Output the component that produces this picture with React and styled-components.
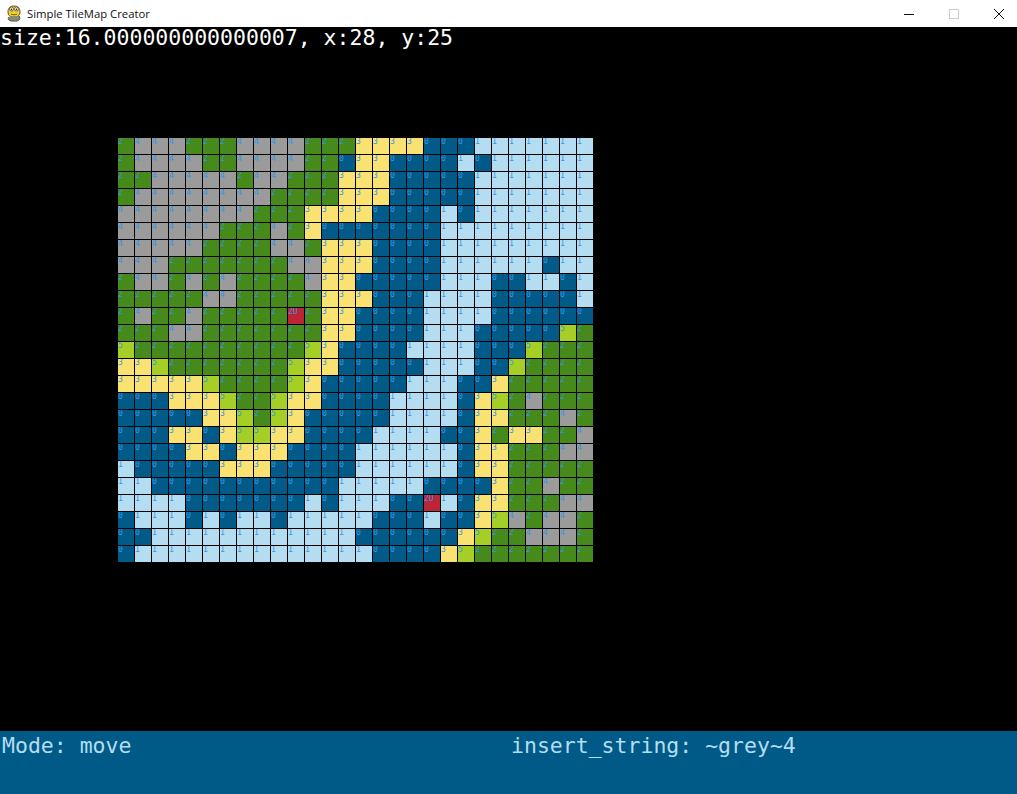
import React from 'react'
import styled, { createGlobalStyle } from 'styled-components'

// one string per row, r is the red marker tile
const MAP = [
  '2444222444422233330001111111',
  '2444422444422033000010111111',
  '2244444244222333000001111111',
  '2444444442222333000001111111',
  '4444444422233330000101111111',
  '4444442224230000000111111111',
  '4444422224423330000111111111',
  '4442222222443330000111111011',
  '2442424222243300000111001101',
  '2222244222223330001111000001',
  '2422422222r23300001111000000',
  '2224422222223300001110000052',
  '5222222222253000011110005222',
  '3352222222533000001110052222',
  '3333352222530000011100322222',
  '0003335225330000111103524222',
  '0000033525300000111103322242',
  '0003303553300001111003233224',
  '0000330333000011111103322244',
  '1000003330000011111103322222',
  '1100000000000111110000322422',
  '111100000001011100r103322244',
  '0111010110111110001003542442',
  '0011111111111100000035224442',
  '0111111111111110000352222222',
]

const TILES = {
  0: '#015a87',
  1: '#b4ddf2',
  2: '#458a1a',
  3: '#f9e272',
  4: '#9b9b9b',
  5: '#a5cf27',
  r: '#bd2436',
}

const GlobalStyle = createGlobalStyle`
  html, body, #root {
    margin: 0;
    height: 100%;
  }
  body {
    background: #000;
    overflow: hidden;
  }
`

const Window = styled.div`
  display: flex;
  flex-direction: column;
  height: 794px;
  width: 1017px;
`

const TitleBar = styled.header`
  display: flex;
  align-items: center;
  flex: 0 0 27px;
  background: #fff;
  padding-left: 6px;
`

const Title = styled.span`
  font: 11.3px "Open Sans", "Noto Sans", sans-serif;
  color: #111;
  margin-left: 5px;
  white-space: nowrap;
`

const Controls = styled.div`
  display: flex;
  align-items: center;
  gap: 35px;
  margin-left: auto;
  padding-right: 13px;
`

const Canvas = styled.main`
  flex: 1;
  background: #000;
  display: flex;
  flex-direction: column;
`

const Readout = styled.div`
  font: 21.5px/22px "DejaVu Sans Mono", monospace;
  color: #fff;
  white-space: pre;
  height: 22px;
`

const Board = styled.div`
  display: grid;
  grid-template-columns: repeat(28, 16px);
  grid-auto-rows: 16px;
  gap: 1px;
  margin: 89px 0 0 118px;
`

const Tile = styled.div`
  background: ${p => TILES[p.$kind]};
  color: #2f98e8;
  font: 8px/8px "DejaVu Sans Mono", monospace;
  overflow: hidden;
`

const StatusBar = styled.footer`
  flex: 0 0 63px;
  background: #005a87;
  display: grid;
  grid-template-columns: 511px 1fr;
  align-items: start;
  padding-top: 4px;
  box-sizing: border-box;
`

const StatusText = styled.span`
  font: 21.5px/22px "DejaVu Sans Mono", monospace;
  color: #b4ddf2;
  white-space: pre;
  padding-left: ${p => p.$inset || 0}px;
`

const SnakeIcon = () => (
  <svg width="16" height="17" viewBox="0 0 16 17">
    <path d="M2 7 C2 3 4 1 8 1 C12 1 14 3 14 7 C14 10 12 12 9 12 L6 12 C4 12 2 10 2 7Z" fill="#f0cf2e" stroke="#6b5a10" strokeWidth="1" />
    <circle cx="5.5" cy="4" r="2" fill="#fff" stroke="#333" strokeWidth="0.7" />
    <circle cx="10.5" cy="4" r="2" fill="#fff" stroke="#333" strokeWidth="0.7" />
    <circle cx="5.5" cy="4.2" r="0.8" fill="#111" />
    <circle cx="10.5" cy="4.2" r="0.8" fill="#111" />
    <path d="M3 12 C1 14 3 16 6 16 L10 16 C13 16 15 14 13 11" fill="#8a8a7a" stroke="#555" strokeWidth="1" />
    <path d="M5 9 C6 10 10 10 11 9" fill="none" stroke="#6b5a10" strokeWidth="1" />
  </svg>
)

const MinimizeIcon = () => (
  <svg width="10" height="10" viewBox="0 0 10 10">
    <path d="M0 5.5H10" stroke="#111" strokeWidth="1" />
  </svg>
)

const MaximizeIcon = () => (
  <svg width="10" height="10" viewBox="0 0 10 10">
    <rect x="0.5" y="0.5" width="9" height="9" fill="none" stroke="#ccc" strokeWidth="1" />
  </svg>
)

const CloseIcon = () => (
  <svg width="10" height="10" viewBox="0 0 10 10">
    <path d="M0 0L10 10M10 0L0 10" stroke="#111" strokeWidth="1" />
  </svg>
)

const App = () => (
  <>
    <GlobalStyle />
    <Window>
      <TitleBar>
        <SnakeIcon />
        <Title>Simple TileMap Creator</Title>
        <Controls>
          <MinimizeIcon />
          <MaximizeIcon />
          <CloseIcon />
        </Controls>
      </TitleBar>
      <Canvas>
        <Readout>size:16.000000000000007, x:28, y:25</Readout>
        <Board>
          {MAP.flatMap((row, y) =>
            row.split('').map((kind, x) => (
              <Tile key={`${x}-${y}`} $kind={kind}>
                {kind === 'r' ? '2U' : kind}
              </Tile>
            ))
          )}
        </Board>
      </Canvas>
      <StatusBar>
        <StatusText $inset={2}>Mode: move</StatusText>
        <StatusText>insert_string: ~grey~4</StatusText>
      </StatusBar>
    </Window>
  </>
)

export default App
